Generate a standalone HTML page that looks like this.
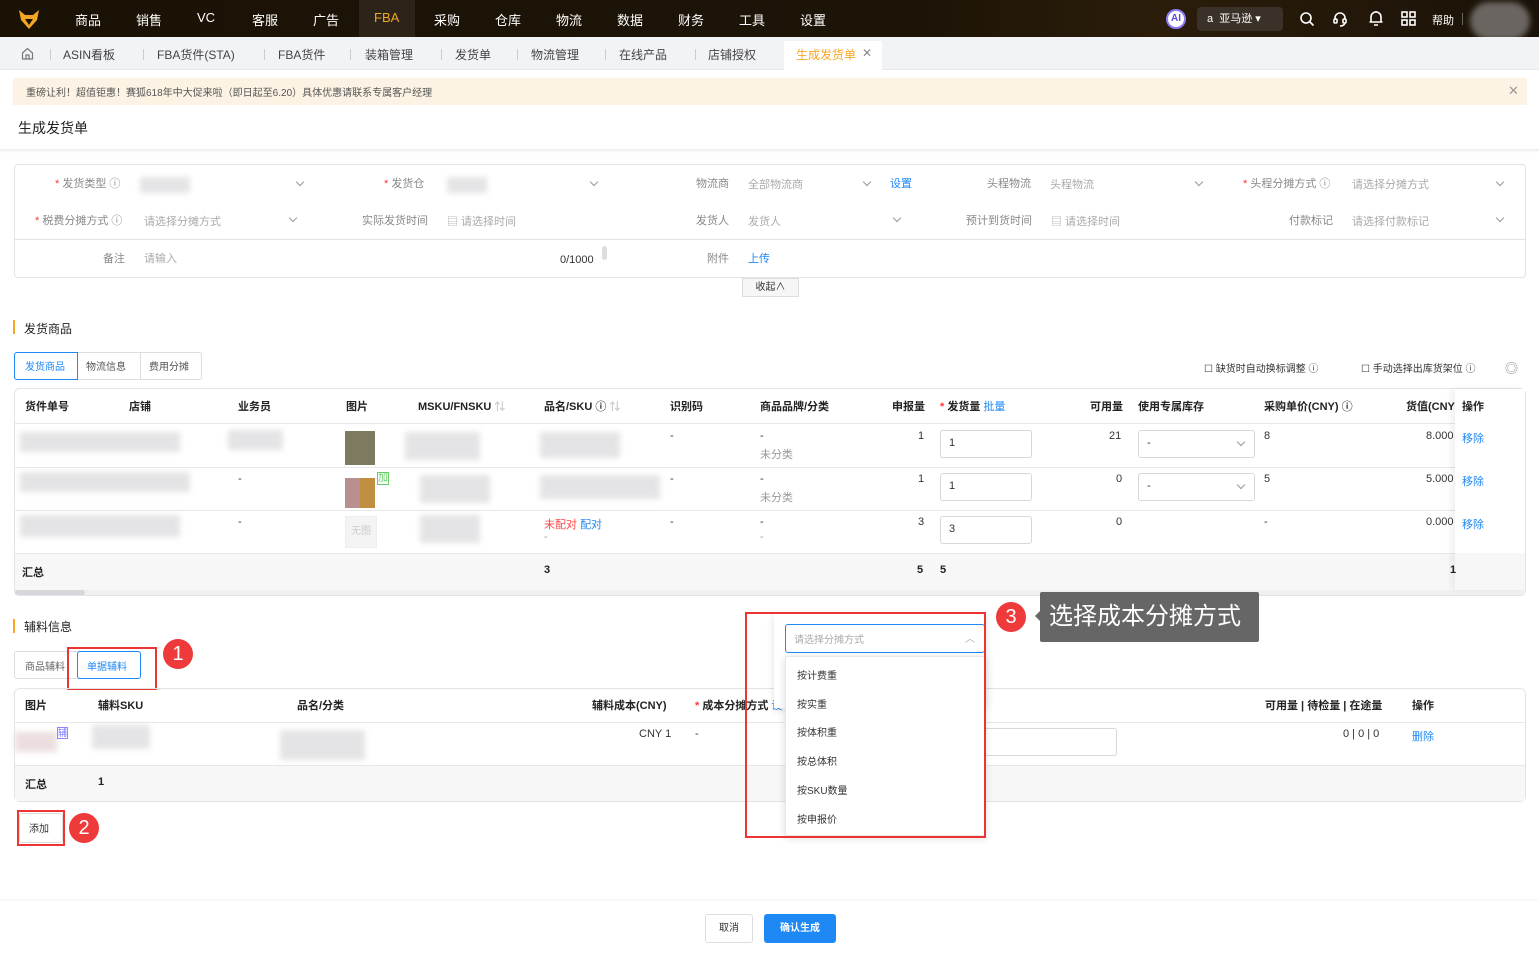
<!DOCTYPE html>
<html><head><meta charset="utf-8"><style>
*{margin:0;padding:0;box-sizing:border-box}
body{width:1539px;height:954px;position:relative;overflow:hidden;background:#fff;font-family:"Liberation Sans","Noto Sans CJK SC",sans-serif;font-size:11px;color:#333}
.a{position:absolute;white-space:nowrap}
.nav{left:0;top:0;width:1539px;height:37px;background:linear-gradient(90deg,#1b1206,#1d1408 60%,#2b1d0a 75%,#1a1208);}
.nav .m{position:absolute;top:10px;color:#fff;font-size:13px}
.tabs{left:0;top:37px;width:1539px;height:33px;background:#f2f3f7;border-bottom:1px solid #e4e6eb}
.tabs .t{position:absolute;top:9px;font-size:12px;color:#444}
.sep{position:absolute;top:12px;width:1px;height:11px;background:#ccc}
.lbl{color:#888;font-size:11px}
.ph{color:#aaa;font-size:11px}
.blur{background:#e4e4e6;filter:blur(3px);position:absolute}
.hd{font-weight:bold;font-size:11px;color:#222}
.blue{color:#1e88f5}
.inp{position:absolute;border:1px solid #d8d8d8;border-radius:3px;background:#fff}
.rb{position:absolute;border:2px solid #ee3333}
.circ{position:absolute;width:30px;height:30px;border-radius:50%;background:#ee3a3a;color:#fff;font-size:20px;text-align:center;line-height:30px}
.chev{position:absolute;width:6px;height:6px;border-right:1px solid #999;border-bottom:1px solid #999;transform:rotate(45deg)}
</style></head><body>
<div class="a nav">
 <svg style="position:absolute;left:18px;top:8px" width="22" height="22" viewBox="0 0 22 22"><path d="M1 2 L7 7 L15 7 L21 2 L19 12 L11 21 L3 12Z" fill="#f5a623"/><path d="M7 11 L11 17 L15 11Z" fill="#1b1206"/></svg>
 <span class="m" style="left:75px">商品</span><span class="m" style="left:136px">销售</span><span class="m" style="left:197px">VC</span><span class="m" style="left:252px">客服</span><span class="m" style="left:313px">广告</span>
 <div style="position:absolute;left:359px;top:0;width:56px;height:37px;background:#2c2418"></div>
 <span class="m" style="left:374px;color:#f5a623">FBA</span><span class="m" style="left:434px">采购</span><span class="m" style="left:495px">仓库</span><span class="m" style="left:556px">物流</span><span class="m" style="left:617px">数据</span><span class="m" style="left:678px">财务</span><span class="m" style="left:739px">工具</span><span class="m" style="left:800px">设置</span>
 <div style="position:absolute;left:1166px;top:9px;width:20px;height:20px;border-radius:50%;background:#fff;border:2px solid #8b7cf6;color:#5b4be0;font-weight:bold;font-size:10px;text-align:center;line-height:16px">AI</div>
 <div style="position:absolute;left:1197px;top:7px;width:86px;height:24px;border-radius:4px;background:#3a3128;color:#fff;font-size:11px;line-height:24px;padding-left:10px">a&nbsp; 亚马逊 ▾</div>
 <svg style="position:absolute;left:1299px;top:11px" width="16" height="16" viewBox="0 0 16 16" fill="none" stroke="#fff" stroke-width="1.6"><circle cx="7" cy="7" r="5"/><path d="M11 11 L14.5 14.5"/></svg>
 <svg style="position:absolute;left:1332px;top:10px" width="16" height="17" viewBox="0 0 16 17" fill="none" stroke="#fff" stroke-width="1.6"><path d="M3 10 V8 a5 5 0 0 1 10 0 V10"/><rect x="2" y="9" width="3" height="4" rx="1"/><rect x="11" y="9" width="3" height="4" rx="1"/><path d="M13 13 Q12 16 8 16"/></svg>
 <svg style="position:absolute;left:1368px;top:10px" width="16" height="17" viewBox="0 0 16 17" fill="none" stroke="#fff" stroke-width="1.6"><path d="M3 12 V7 a5 5 0 0 1 10 0 V12 Z M1.5 12 H14.5 M6 15 H10 M8 1 V2"/></svg>
 <svg style="position:absolute;left:1401px;top:11px" width="15" height="15" viewBox="0 0 15 15" fill="none" stroke="#fff" stroke-width="1.6"><rect x="1" y="1" width="5" height="5"/><rect x="9" y="1" width="5" height="5"/><rect x="1" y="9" width="5" height="5"/><rect x="9" y="9" width="5" height="5"/></svg>
 <span class="m" style="left:1432px;font-size:11px;top:12px">帮助</span>
 <div style="position:absolute;left:1462px;top:13px;width:1px;height:12px;background:#666"></div>
 <div style="position:absolute;left:1470px;top:2px;width:60px;height:38px;border-radius:20px;background:#6a6560;filter:blur(3px)"></div>
</div>
<div class="a tabs">
 <svg style="position:absolute;left:21px;top:10px" width="13" height="13" viewBox="0 0 13 13" fill="none" stroke="#777" stroke-width="1.2"><path d="M1.5 6 L6.5 1.5 L11.5 6 V12 H1.5 Z M5 12 V8 H8 V12"/></svg>
 <div class="sep" style="left:50px"></div>
 <span class="t" style="left:63px">ASIN看板</span><div class="sep" style="left:143px"></div>
 <span class="t" style="left:157px">FBA货件(STA)</span><div class="sep" style="left:264px"></div>
 <span class="t" style="left:278px">FBA货件</span><div class="sep" style="left:350px"></div>
 <span class="t" style="left:365px">装箱管理</span><div class="sep" style="left:441px"></div>
 <span class="t" style="left:455px">发货单</span><div class="sep" style="left:517px"></div>
 <span class="t" style="left:531px">物流管理</span><div class="sep" style="left:605px"></div>
 <span class="t" style="left:619px">在线产品</span><div class="sep" style="left:695px"></div>
 <span class="t" style="left:708px">店铺授权</span>
 <div style="position:absolute;left:784px;top:4px;width:98px;height:29px;background:#fff"></div>
 <span class="t" style="left:796px;color:#f5a623">生成发货单</span><span class="t" style="left:862px;color:#888">✕</span>
</div>
<div class="a" style="left:13px;top:78px;width:1514px;height:27px;background:#fdf3e4"></div>
<span class="a" style="left:26px;top:84px;font-size:10px;color:#555">重磅让利！超值钜惠！赛狐618年中大促来啦（即日起至6.20）具体优惠请联系专属客户经理</span>
<span class="a" style="left:1508px;top:83px;font-size:13px;color:#999">✕</span>
<span class="a" style="left:18px;top:118px;font-size:14px;color:#222">生成发货单</span>
<div class="a" style="left:0;top:149px;width:1539px;height:4px;background:linear-gradient(#eee,#fff)"></div>

<div class="a" style="left:14px;top:164px;width:1512px;height:114px;border:1px solid #e3e3e3;border-radius:4px"></div>
<div class="a" style="left:14px;top:239px;width:1512px;height:1px;background:#e3e3e3"></div>
<span class="a lbl" style="left:55px;top:175px"><span style="color:#f33">*</span> 发货类型 ⓘ</span>
<div class="blur" style="left:140px;top:177px;width:50px;height:16px"></div><div class="chev" style="left:297px;top:179px"></div>
<span class="a lbl" style="left:384px;top:175px"><span style="color:#f33">*</span> 发货仓</span>
<div class="blur" style="left:447px;top:177px;width:40px;height:16px"></div><div class="chev" style="left:591px;top:179px"></div>
<span class="a lbl" style="left:696px;top:175px">物流商</span><span class="a ph" style="left:748px;top:176px">全部物流商</span><div class="chev" style="left:864px;top:179px"></div>
<span class="a blue" style="left:890px;top:175px">设置</span>
<span class="a lbl" style="left:987px;top:175px">头程物流</span><span class="a ph" style="left:1050px;top:176px">头程物流</span><div class="chev" style="left:1196px;top:179px"></div>
<span class="a lbl" style="left:1243px;top:175px"><span style="color:#f33">*</span> 头程分摊方式 ⓘ</span><span class="a ph" style="left:1352px;top:176px">请选择分摊方式</span><div class="chev" style="left:1497px;top:179px"></div>
<span class="a lbl" style="left:35px;top:212px"><span style="color:#f33">*</span> 税费分摊方式 ⓘ</span><span class="a ph" style="left:144px;top:213px">请选择分摊方式</span><div class="chev" style="left:290px;top:215px"></div>
<span class="a lbl" style="left:362px;top:212px">实际发货时间</span><span class="a ph" style="left:447px;top:213px">▤ 请选择时间</span>
<span class="a lbl" style="left:696px;top:212px">发货人</span><span class="a ph" style="left:748px;top:213px">发货人</span><div class="chev" style="left:894px;top:215px"></div>
<span class="a lbl" style="left:966px;top:212px">预计到货时间</span><span class="a ph" style="left:1051px;top:213px">▤ 请选择时间</span>
<span class="a lbl" style="left:1289px;top:212px">付款标记</span><span class="a ph" style="left:1352px;top:213px">请选择付款标记</span><div class="chev" style="left:1497px;top:215px"></div>
<span class="a lbl" style="left:103px;top:250px">备注</span><span class="a ph" style="left:144px;top:250px">请输入</span>
<span class="a" style="left:560px;top:254px;color:#333">0/1000</span>
<div class="a" style="left:602px;top:246px;width:5px;height:14px;background:#ddd;border-radius:3px"></div>
<span class="a lbl" style="left:707px;top:250px">附件</span><span class="a blue" style="left:748px;top:250px">上传</span>
<div class="a" style="left:742px;top:278px;width:57px;height:19px;border:1px solid #ddd;background:#f6f6f6;font-size:10px;text-align:center;line-height:17px">收起∧</div>

<div class="a" style="left:13px;top:320px;width:2px;height:14px;background:#f5a623"></div>
<span class="a" style="left:24px;top:320px;font-size:12px;color:#222">发货商品</span>
<div class="a" style="left:14px;top:352px;width:188px;height:28px;border:1px solid #ddd;border-radius:3px"></div>
<div class="a" style="left:14px;top:352px;width:64px;height:28px;border:1px solid #1e88f5;border-radius:3px 0 0 3px"></div>
<span class="a blue" style="left:25px;top:358px;font-size:10px">发货商品</span>
<span class="a" style="left:86px;top:358px;font-size:10px;color:#555">物流信息</span><div class="a" style="left:140px;top:352px;width:1px;height:28px;background:#ddd"></div>
<span class="a" style="left:149px;top:358px;font-size:10px;color:#555">费用分摊</span>
<span class="a" style="left:1204px;top:360px;font-size:10px;color:#333">☐ 缺货时自动换标调整 ⓘ</span>
<span class="a" style="left:1361px;top:360px;font-size:10px;color:#333">☐ 手动选择出库货架位 ⓘ</span>
<span class="a" style="left:1505px;top:358px;font-size:13px;color:#888">◎</span>

<div class="a" style="left:14px;top:388px;width:1512px;height:208px;border:1px solid #e3e3e3;border-radius:6px"></div>
<div class="a" style="left:15px;top:423px;width:1510px;height:1px;background:#e8e8e8"></div>
<div class="a" style="left:15px;top:467px;width:1510px;height:1px;background:#e8e8e8"></div>
<div class="a" style="left:15px;top:510px;width:1510px;height:1px;background:#e8e8e8"></div>
<div class="a" style="left:15px;top:553px;width:1510px;height:37px;background:#f7f7f7;border-top:1px solid #e8e8e8"></div>
<div class="a" style="left:15px;top:590px;width:1510px;height:5px;background:#f0f0f0"></div>
<div class="a" style="left:15px;top:590px;width:70px;height:5px;background:#d6d7da;border-radius:3px"></div>
<div class="a" style="left:1455px;top:389px;width:70px;height:200px;background:#fff;box-shadow:-4px 0 6px rgba(0,0,0,.06)"></div>
<div class="a" style="left:1455px;top:553px;width:70px;height:37px;background:#f7f7f7"></div>
<span class="a hd" style="left:25px;top:398px">货件单号</span><span class="a hd" style="left:129px;top:398px">店铺</span><span class="a hd" style="left:238px;top:398px">业务员</span><span class="a hd" style="left:346px;top:398px">图片</span><span class="a hd" style="left:418px;top:398px">MSKU/FNSKU <span style="color:#ccc">⇅</span></span><span class="a hd" style="left:544px;top:398px">品名/SKU ⓘ <span style="color:#ccc">⇅</span></span><span class="a hd" style="left:670px;top:398px">识别码</span><span class="a hd" style="left:760px;top:398px">商品品牌/分类</span><span class="a hd" style="left:892px;top:398px">申报量</span><span class="a hd" style="left:940px;top:398px"><span style="color:#f33">*</span> 发货量 <span class="blue" style="font-weight:normal">批量</span></span><span class="a hd" style="left:1090px;top:398px">可用量</span><span class="a hd" style="left:1138px;top:398px">使用专属库存</span><span class="a hd" style="left:1264px;top:398px">采购单价(CNY) ⓘ</span><span class="a hd" style="left:1406px;top:398px">货值(CNY</span><span class="a hd" style="left:1462px;top:398px">操作</span>
<!-- rows -->
<div class="blur" style="left:20px;top:432px;width:160px;height:20px"></div><div class="blur" style="left:228px;top:430px;width:55px;height:20px"></div>
<div class="a" style="left:345px;top:431px;width:30px;height:34px;background:#7d7a5f"></div><div class="blur" style="left:405px;top:432px;width:75px;height:28px"></div><div class="blur" style="left:540px;top:432px;width:80px;height:26px"></div>
<span class="a" style="left:670px;top:430px">-</span><span class="a" style="left:760px;top:430px">-</span><span class="a" style="left:760px;top:446px;color:#999">未分类</span>
<span class="a" style="left:918px;top:430px">1</span><div class="inp" style="left:940px;top:430px;width:92px;height:28px"></div><span class="a" style="left:949px;top:437px">1</span>
<span class="a" style="left:1109px;top:430px">21</span><div class="inp" style="left:1138px;top:430px;width:117px;height:28px"></div><span class="a" style="left:1147px;top:437px">-</span><div class="chev" style="left:1238px;top:439px"></div>
<span class="a" style="left:1264px;top:430px">8</span><span class="a" style="left:1426px;top:430px">8.000</span><span class="a blue" style="left:1462px;top:430px">移除</span>
<div class="blur" style="left:20px;top:472px;width:170px;height:20px"></div><span class="a" style="left:238px;top:473px">-</span>
<div class="a" style="left:345px;top:478px;width:30px;height:30px;background:linear-gradient(90deg,#b89090 50%,#c09040 50%)"></div><span class="a" style="left:377px;top:472px;color:#6c6;font-size:10px;border:1px solid #6c6;line-height:11px">加</span>
<div class="blur" style="left:420px;top:475px;width:70px;height:28px"></div><div class="blur" style="left:540px;top:475px;width:120px;height:24px"></div>
<span class="a" style="left:670px;top:473px">-</span><span class="a" style="left:760px;top:473px">-</span><span class="a" style="left:760px;top:489px;color:#999">未分类</span>
<span class="a" style="left:918px;top:473px">1</span><div class="inp" style="left:940px;top:473px;width:92px;height:28px"></div><span class="a" style="left:949px;top:480px">1</span>
<span class="a" style="left:1116px;top:473px">0</span><div class="inp" style="left:1138px;top:473px;width:117px;height:28px"></div><span class="a" style="left:1147px;top:480px">-</span><div class="chev" style="left:1238px;top:482px"></div>
<span class="a" style="left:1264px;top:473px">5</span><span class="a" style="left:1426px;top:473px">5.000</span><span class="a blue" style="left:1462px;top:473px">移除</span>
<div class="blur" style="left:20px;top:515px;width:160px;height:22px"></div><span class="a" style="left:238px;top:516px">-</span>
<div class="a" style="left:345px;top:516px;width:32px;height:32px;background:#f4f4f4;border:1px solid #eee;color:#ccc;font-size:10px;text-align:center;line-height:30px">无图</div><div class="blur" style="left:420px;top:515px;width:60px;height:28px"></div>
<span class="a" style="left:544px;top:516px;color:#f44">未配对 <span class="blue">配对</span></span><span class="a" style="left:544px;top:531px;color:#999">-</span>
<span class="a" style="left:670px;top:516px">-</span><span class="a" style="left:760px;top:516px">-</span><span class="a" style="left:760px;top:531px;color:#999">-</span>
<span class="a" style="left:918px;top:516px">3</span><div class="inp" style="left:940px;top:516px;width:92px;height:28px"></div><span class="a" style="left:949px;top:523px">3</span>
<span class="a" style="left:1116px;top:516px">0</span><span class="a" style="left:1264px;top:516px">-</span><span class="a" style="left:1426px;top:516px">0.000</span><span class="a blue" style="left:1462px;top:516px">移除</span>
<span class="a hd" style="left:22px;top:564px">汇总</span><span class="a hd" style="left:544px;top:564px">3</span><span class="a hd" style="left:917px;top:564px">5</span><span class="a hd" style="left:940px;top:564px">5</span><span class="a hd" style="left:1450px;top:564px">1</span>

<div class="a" style="left:13px;top:619px;width:2px;height:14px;background:#f5a623"></div>
<span class="a" style="left:24px;top:618px;font-size:12px;color:#222">辅料信息</span>
<div class="a" style="left:14px;top:651px;width:82px;height:28px;border:1px solid #ddd;border-radius:3px"></div>
<span class="a" style="left:25px;top:658px;font-size:10px;color:#666">商品辅料</span>
<div class="a" style="left:77px;top:651px;width:64px;height:28px;border:1px solid #1e88f5;border-radius:3px;background:#fff"></div>
<span class="a blue" style="left:87px;top:658px;font-size:10px">单据辅料</span>
<div class="rb" style="left:67px;top:647px;width:90px;height:43px"></div>
<div class="circ" style="left:163px;top:639px">1</div>

<div class="a" style="left:14px;top:688px;width:1512px;height:114px;border:1px solid #e3e3e3;border-radius:6px"></div>
<div class="a" style="left:15px;top:722px;width:1510px;height:1px;background:#e8e8e8"></div>
<div class="a" style="left:15px;top:765px;width:1510px;height:36px;background:#f7f7f7;border-top:1px solid #e8e8e8"></div>
<span class="a hd" style="left:25px;top:697px">图片</span><span class="a hd" style="left:98px;top:697px">辅料SKU</span><span class="a hd" style="left:297px;top:697px">品名/分类</span><span class="a hd" style="left:592px;top:697px">辅料成本(CNY)</span><span class="a hd" style="left:695px;top:697px"><span style="color:#f33">*</span> 成本分摊方式 <span class="blue" style="font-weight:normal">设</span></span>
<span class="a hd" style="left:1265px;top:697px">可用量 | 待检量 | 在途量</span><span class="a hd" style="left:1412px;top:697px">操作</span>
<div class="blur" style="left:15px;top:732px;width:42px;height:20px;background:#ecdede"></div><span class="a" style="left:57px;top:727px;font-size:9px;color:#77f;border:1px solid #88f;line-height:10px">辅</span>
<div class="blur" style="left:92px;top:725px;width:58px;height:24px"></div><div class="blur" style="left:280px;top:730px;width:85px;height:30px"></div>
<span class="a" style="left:639px;top:728px">CNY 1</span><span class="a" style="left:695px;top:728px">-</span>
<div class="inp" style="left:980px;top:728px;width:137px;height:28px"></div>
<span class="a" style="left:1343px;top:728px">0 | 0 | 0</span><span class="a blue" style="left:1412px;top:728px">删除</span>
<span class="a hd" style="left:25px;top:776px">汇总</span><span class="a hd" style="left:98px;top:776px">1</span>
<div class="a" style="left:19px;top:813px;width:44px;height:30px;border:1px solid #ddd;border-radius:3px"></div>
<span class="a" style="left:29px;top:820px;font-size:10px">添加</span>
<div class="rb" style="left:17px;top:810px;width:48px;height:36px"></div>
<div class="circ" style="left:69px;top:813px">2</div>

<!-- dropdown -->
<div class="a" style="left:774px;top:613px;width:212px;height:95px;background:#fff;box-shadow:0 2px 8px rgba(0,0,0,.12)"></div>
<div class="a" style="left:785px;top:624px;width:200px;height:29px;border:1px solid #1e88f5;border-radius:3px;background:#fff"></div>
<span class="a ph" style="left:794px;top:631px;font-size:10px">请选择分摊方式</span><span class="a" style="left:965px;top:630px;color:#aaa;font-size:10px">︿</span>
<div class="a" style="left:785px;top:656px;width:200px;height:180px;background:#fff;box-shadow:0 2px 8px rgba(0,0,0,.15);border:1px solid #e8e8e8"></div>
<span class="a" style="left:797px;top:667px;font-size:10px">按计费重</span>
<span class="a" style="left:797px;top:696px;font-size:10px">按实重</span>
<span class="a" style="left:797px;top:724px;font-size:10px">按体积重</span>
<span class="a" style="left:797px;top:753px;font-size:10px">按总体积</span>
<span class="a" style="left:797px;top:782px;font-size:10px">按SKU数量</span>
<span class="a" style="left:797px;top:811px;font-size:10px">按申报价</span>
<div class="rb" style="left:745px;top:612px;width:241px;height:226px"></div>
<div class="circ" style="left:996px;top:602px">3</div>
<div class="a" style="left:1030px;top:611px;width:0;height:0;border:5px solid transparent;border-right-color:#666"></div>
<div class="a" style="left:1040px;top:592px;width:219px;height:50px;background:#666;border-radius:2px;color:#fff;font-size:24px;line-height:50px;padding-left:9px">选择成本分摊方式</div>

<div class="a" style="left:0;top:901px;width:1539px;height:53px;background:#fff;box-shadow:0 -2px 4px rgba(0,0,0,.04)"></div>
<div class="a" style="left:705px;top:914px;width:48px;height:29px;border:1px solid #ddd;border-radius:3px;text-align:center;line-height:27px;font-size:10px">取消</div>
<div class="a" style="left:764px;top:914px;width:72px;height:29px;background:#1e88f5;border-radius:3px;text-align:center;line-height:29px;font-size:10px;color:#fff;font-weight:bold">确认生成</div>
</body></html>
